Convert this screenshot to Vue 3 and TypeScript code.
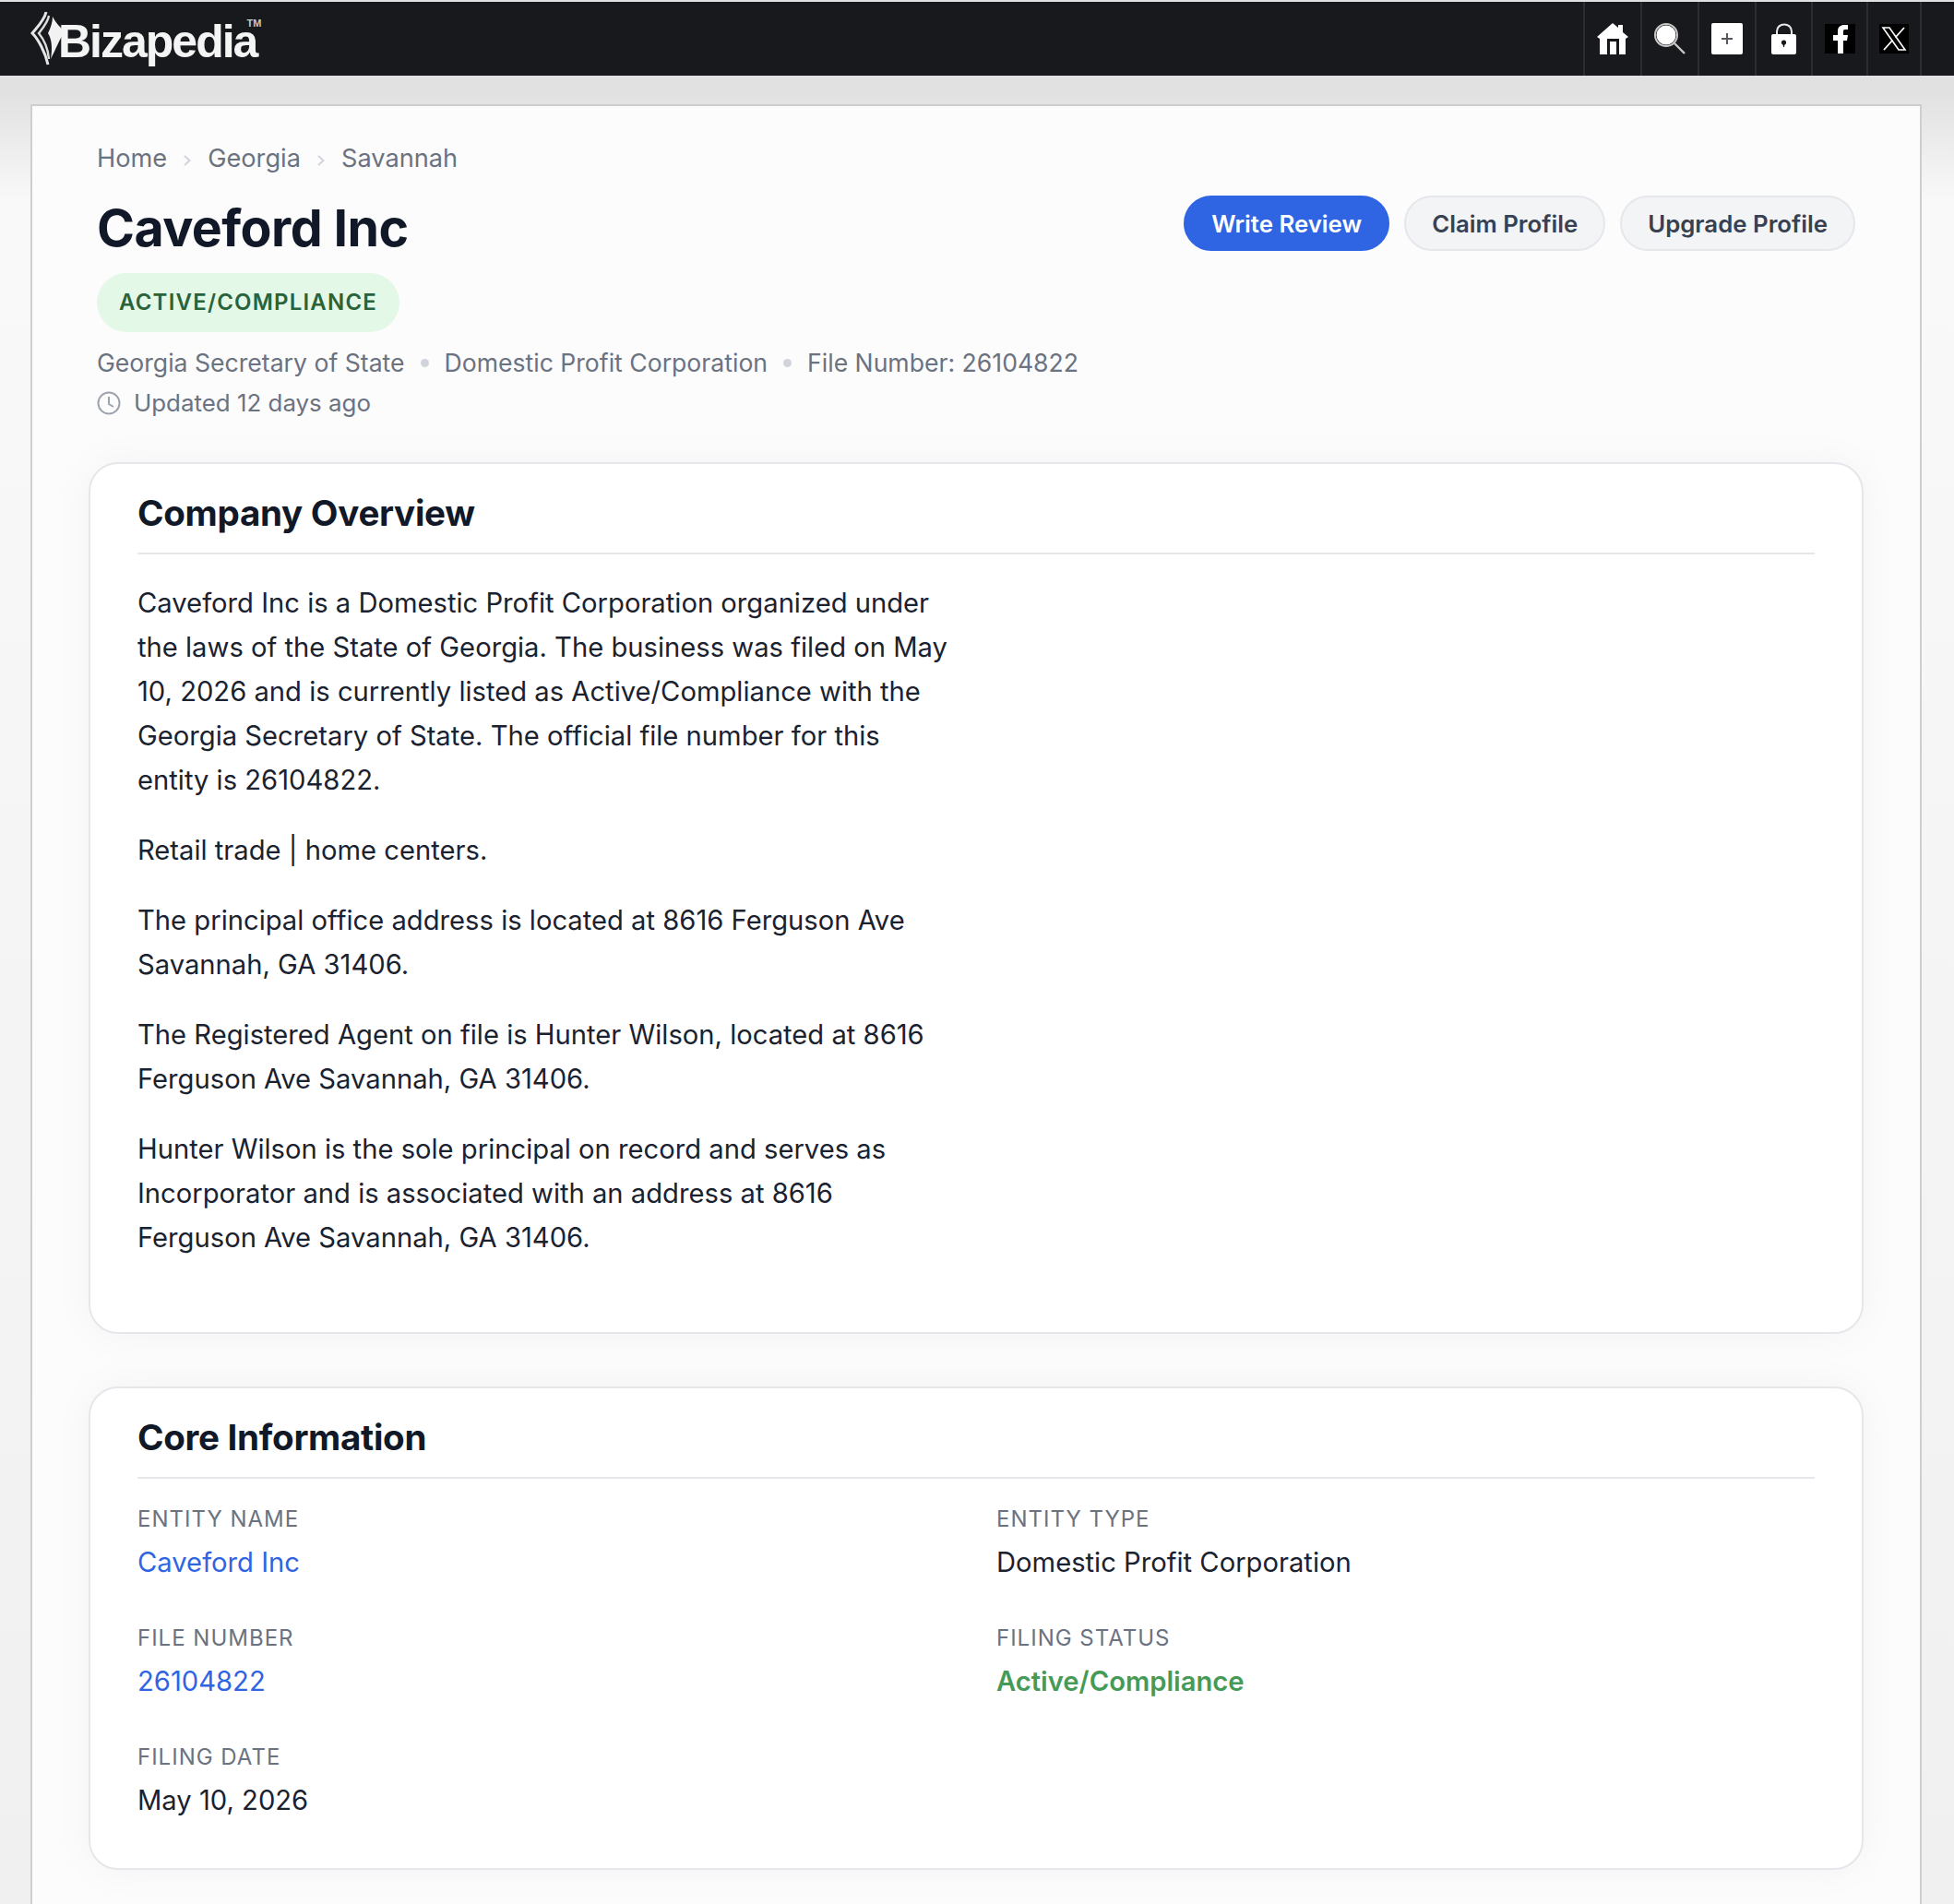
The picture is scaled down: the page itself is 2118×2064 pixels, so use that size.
<script setup lang="ts">
interface Field {
  label: string
  value: string
  kind?: 'link' | 'status'
}

const crumbs = ['Home', 'Georgia', 'Savannah']
const metaItems = ['Georgia Secretary of State', 'Domestic Profit Corporation', 'File Number: 26104822']

const paragraphs = [
  'Caveford Inc is a Domestic Profit Corporation organized under the laws of the State of Georgia. The business was filed on May 10, 2026 and is currently listed as Active/Compliance with the Georgia Secretary of State. The official file number for this entity is 26104822.',
  'Retail trade | home centers.',
  'The principal office address is located at 8616 Ferguson Ave Savannah, GA 31406.',
  'The Registered Agent on file is Hunter Wilson, located at 8616 Ferguson Ave Savannah, GA 31406.',
  'Hunter Wilson is the sole principal on record and serves as Incorporator and is associated with an address at 8616 Ferguson Ave Savannah, GA 31406.',
]

const fields: Field[] = [
  { label: 'Entity Name', value: 'Caveford Inc', kind: 'link' },
  { label: 'Entity Type', value: 'Domestic Profit Corporation' },
  { label: 'File Number', value: '26104822', kind: 'link' },
  { label: 'Filing Status', value: 'Active/Compliance', kind: 'status' },
  { label: 'Filing Date', value: 'May 10, 2026' },
]
</script>

<template>
  <div class="page">
    <header class="topbar">
      <div class="logo">
        <svg class="logo-mark" viewBox="0 0 38 60" width="38" height="60">
          <path d="M24 6 C28 14 33 18 37 22 C32 30 28 40 22 52 C24 40 23 30 19 24 C22 18 24 12 24 6 Z" fill="#f2f2f2" />
          <path d="M17 1 C15 10 7 18 2 24 C8 30 16 44 19 58" fill="none" stroke="#e6e6e6" stroke-width="3" />
          <path d="M20 5 C19 12 13 19 9 24 C14 30 19 40 20 52" fill="none" stroke="#dcdcdc" stroke-width="2.4" />
        </svg>
        <span class="logo-text">Bizapedia</span>
        <span class="logo-tm">TM</span>
      </div>
      <nav class="nav-icons">
        <a class="nav-cell">
          <svg viewBox="0 0 34 34" width="34" height="34">
            <path d="M0 15 L17 0 L23 5 V2 H28 V10 L34 15 L31 17 V34 H24 V17 H11 V34 H3 V17 Z M14 20 H21 V34 H14 Z" fill="#fff" fill-rule="evenodd" />
          </svg>
        </a>
        <a class="nav-cell">
          <svg viewBox="0 0 34 34" width="34" height="34">
            <circle cx="13" cy="13" r="10.5" fill="#fff" />
            <circle cx="13" cy="13" r="12" fill="none" stroke="#c8c8c8" stroke-width="2" />
            <path d="M22 22 L33 33" stroke="#c8c8c8" stroke-width="2.4" />
          </svg>
        </a>
        <a class="nav-cell">
          <svg viewBox="0 0 34 34" width="34" height="34">
            <rect width="34" height="34" rx="2" fill="#fff" />
            <path d="M17 11 V23 M11 17 H23" stroke="#55585c" stroke-width="2" />
          </svg>
        </a>
        <a class="nav-cell">
          <svg viewBox="0 0 28 34" width="28" height="34">
            <path d="M6 14 V9 C6 -1 22 -1 22 9 V14" fill="none" stroke="#e8e8e8" stroke-width="2" />
            <rect y="12" width="27" height="22" rx="2" fill="#fff" />
            <circle cx="13.5" cy="21" r="2.6" fill="#17191c" />
            <path d="M12.4 22 H14.6 L14 26 H13 Z" fill="#17191c" />
          </svg>
        </a>
        <a class="nav-cell">
          <svg viewBox="0 0 33 32" width="33" height="32">
            <rect width="33" height="32" fill="#000" />
            <path d="M14 32 V18 H9 V12 H14 V8 C14 3 17 1 21 1 H25 V6 H22 C20 6 20 7 20 9 V12 H25 L24 18 H20 V32 Z" fill="#fff" />
          </svg>
        </a>
        <a class="nav-cell">
          <svg viewBox="0 0 32 32" width="32" height="32">
            <rect width="32" height="32" fill="#000" />
            <path d="M4 4 H11 L28 28 H21 Z" fill="none" stroke="#fff" stroke-width="1.6" />
            <path d="M27 4 L17.5 14.5 M14.5 17.5 L5 28" stroke="#fff" stroke-width="1.8" />
          </svg>
        </a>
      </nav>
    </header>

    <main class="panel">
      <div class="head">
        <div class="breadcrumb">
          <template v-for="(c, i) in crumbs" :key="c">
            <span>{{ c }}</span>
            <svg v-if="i < crumbs.length - 1" class="chev" viewBox="0 0 10 14" width="10" height="14">
              <path d="M2 2 L7.5 7 L2 12" fill="none" stroke="#d1d5db" stroke-width="2" />
            </svg>
          </template>
        </div>
        <div class="title-row">
          <h1>Caveford Inc</h1>
          <div class="actions">
            <button class="btn primary">Write Review</button>
            <button class="btn">Claim Profile</button>
            <button class="btn">Upgrade Profile</button>
          </div>
        </div>
        <span class="badge">ACTIVE/COMPLIANCE</span>
        <div class="meta">
          <template v-for="(m, i) in metaItems" :key="m">
            <span>{{ m }}</span>
            <i v-if="i < metaItems.length - 1" class="dot"></i>
          </template>
        </div>
        <div class="updated">
          <svg viewBox="0 0 26 26" width="26" height="26">
            <circle cx="13" cy="13" r="11.5" fill="none" stroke="#9ca3af" stroke-width="2" />
            <path d="M13 6 V14 L18 17" fill="none" stroke="#9ca3af" stroke-width="2" />
          </svg>
          <span>Updated 12 days ago</span>
        </div>
      </div>

      <section class="card overview">
        <h2>Company Overview</h2>
        <div class="prose">
          <p v-for="p in paragraphs" :key="p">{{ p }}</p>
        </div>
      </section>

      <section class="card core">
        <h2>Core Information</h2>
        <div class="grid">
          <div v-for="f in fields" :key="f.label" class="field">
            <div class="label">{{ f.label }}</div>
            <div class="value" :class="f.kind">{{ f.value }}</div>
          </div>
        </div>
      </section>
    </main>
  </div>
</template>

<style>
html,
body {
  margin: 0;
  background: #f4f4f4;
}
</style>

<style scoped>
.page {
  height: 2064px;
  overflow: hidden;
  padding-top: 2px;
  box-sizing: border-box;
  font-family: Inter, "Liberation Sans", sans-serif;
  background: linear-gradient(#e1e1e1 0, #e1e1e1 100px, #f9f9f9 220px, #f3f3f3 1400px, #f0f0f0 2064px);
}

.topbar {
  display: flex;
  justify-content: space-between;
  height: 80px;
  background: #17191c;
}

.logo {
  display: flex;
  align-items: flex-start;
  padding-left: 33px;
  color: #f4f4f4;
}

.logo-mark {
  margin-top: 10px;
  flex: none;
}

.logo-text {
  font-family: "Liberation Sans", sans-serif;
  font-weight: 700;
  font-size: 50px;
  line-height: 30px;
  margin: 28px 0 0 -8px;
  letter-spacing: -2px;
}

.logo-tm {
  font-family: "Liberation Sans", sans-serif;
  font-weight: 700;
  font-size: 11px;
  line-height: 10px;
  margin: 18px 0 0 -11px;
  color: #c9c9c9;
}

.nav-icons {
  display: flex;
  margin-right: 35px;
  border-left: 2px solid #2b2e31;
}

.nav-cell {
  width: 60px;
  display: flex;
  align-items: center;
  justify-content: center;
  border-right: 2px solid #2b2e31;
}

.nav-cell:nth-child(4) {
  width: 59px;
}

.nav-cell:nth-child(5) {
  width: 58px;
}

.nav-cell:nth-child(6) {
  width: 56px;
}

.panel {
  margin: 31px 35px 0 33px;
  height: 2000px;
  padding: 39px 61px 0;
  box-sizing: border-box;
  background: #fcfcfd;
  border: 2px solid #cecece;
  border-bottom: 0;
}

.head {
  padding: 0 9px;
}

.breadcrumb {
  display: flex;
  align-items: center;
  gap: 17px;
  font-size: 27.2px;
  line-height: 36px;
  color: #6b7280;
}

.chev {
  margin-top: 3px;
}

.title-row {
  display: flex;
  justify-content: space-between;
  align-items: flex-start;
  margin-top: 23px;
}

h1 {
  margin: 0;
  font-size: 55.5px;
  line-height: 68px;
  font-weight: 700;
  letter-spacing: -0.6px;
  color: #111827;
}

.actions {
  display: flex;
  gap: 16px;
  margin-top: -1px;
}

.btn {
  height: 60px;
  padding: 0 28px;
  border-radius: 30px;
  border: 2px solid #e5e7eb;
  background: #f3f4f6;
  font-family: Inter, "Liberation Sans", sans-serif;
  font-size: 25.8px;
  font-weight: 600;
  color: #374151;
}

.primary {
  border-color: #2f65e3;
  background: #2f65e3;
  color: #fff;
}

.badge {
  display: inline-block;
  margin-top: 15px;
  padding: 0 24px;
  height: 64px;
  line-height: 64px;
  border-radius: 32px;
  background: #e4f8e8;
  color: #2a6339;
  font-size: 24px;
  font-weight: 600;
  letter-spacing: 1.2px;
}

.meta {
  display: flex;
  align-items: center;
  gap: 17px;
  margin-top: 11px;
  font-size: 26.6px;
  line-height: 44px;
  color: #6b7280;
}

.dot {
  width: 9px;
  height: 9px;
  border-radius: 50%;
  background: #d1d5db;
}

.updated {
  display: flex;
  align-items: center;
  gap: 14px;
  font-size: 25.9px;
  line-height: 44px;
  color: #6b7280;
}

.card {
  background: #fff;
  border: 2px solid #e5e7eb;
  border-radius: 32px;
  padding: 27px 51px 0;
  box-sizing: border-box;
  box-shadow: 0 0 44px rgba(0, 0, 0, 0.045);
}

.overview {
  margin-top: 42px;
  height: 945px;
}

.core {
  margin-top: 57px;
  height: 524px;
}

h2 {
  margin: 0;
  padding-bottom: 17px;
  border-bottom: 2px solid #e5e7eb;
  font-size: 38.6px;
  line-height: 52px;
  font-weight: 700;
  letter-spacing: -0.3px;
  color: #111827;
}

.prose {
  max-width: 880px;
  padding-top: 29px;
}

.prose p {
  margin: 0 0 28px;
  font-size: 29.2px;
  line-height: 48px;
  color: #1a2230;
}

.grid {
  display: grid;
  grid-template-columns: 1fr 1fr;
  column-gap: 44px;
  row-gap: 43px;
  padding-top: 27px;
}

.label {
  font-size: 24px;
  line-height: 34px;
  letter-spacing: 1px;
  text-transform: uppercase;
  color: #6b7280;
}

.value {
  margin-top: 8px;
  font-size: 29.2px;
  line-height: 44px;
  color: #1a2230;
}

.link {
  color: #2f65e3;
}

.status {
  color: #459a58;
  font-weight: 600;
}
</style>
